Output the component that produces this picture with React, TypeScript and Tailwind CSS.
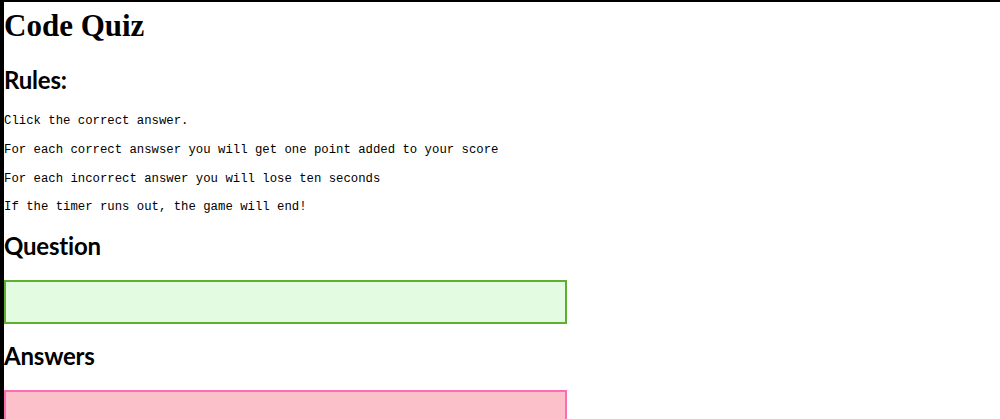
import React from 'react'

const rules = [
  'Click the correct answer.',
  'For each correct answser you will get one point added to your score',
  'For each incorrect answer you will lose ten seconds',
  'If the timer runs out, the game will end!',
]

export default function App() {
  return (
    <div className="min-h-screen bg-white border-t-2 border-l-4 border-black text-black overflow-hidden">
      <h1 className="mt-[6px] text-[31px] leading-[36px] font-bold font-['Liberation_Serif',serif]">Code Quiz</h1>

      <h2 className="mt-[19.5px] text-[24px] leading-[32px] font-bold tracking-[-0.2px] font-['Lato',sans-serif]">Rules:</h2>

      <div className="mt-[11.6px] font-['Liberation_Mono',monospace] text-[12.3px] leading-[28.7px]">
        {rules.map((r) => (
          <p key={r} className="whitespace-pre">{r}</p>
        ))}
      </div>

      <h2 className="mt-[8.5px] text-[24px] leading-[32px] font-bold tracking-[-0.2px] font-['Lato',sans-serif]">Question</h2>
      <div className="mt-[17.3px] w-[563px] h-[44px] border-2 border-[#5eae32] bg-[#e3fbe0]"></div>

      <h2 className="mt-[16.7px] text-[24px] leading-[32px] font-bold tracking-[-0.2px] font-['Lato',sans-serif]">Answers</h2>
      <div className="mt-[17.3px] w-[563px] h-[44px] border-2 border-[#fd6db3] bg-[#fcc0cb]"></div>
    </div>
  )
}
